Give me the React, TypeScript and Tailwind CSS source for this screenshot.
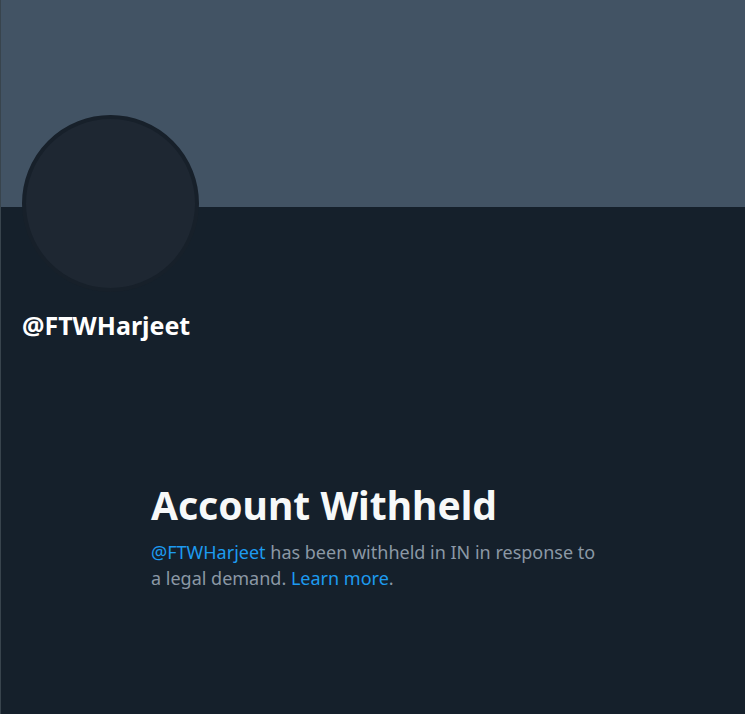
export default function App() {
  return (
    <div className="min-h-screen bg-[#15202b] border-l border-[#38444d] font-['Noto_Sans',sans-serif]">
      <div className="h-[207px] bg-[#425364]" />
      <div className="px-[21px]">
        <div className="-mt-[92px] w-[177px] h-[177px] rounded-full border-[4px] border-[#17202a] bg-[#1e2732]" />
        <div className="mt-[19px] text-[25px] leading-[28px] font-bold text-white">@FTWHarjeet</div>
      </div>
      <div className="ml-[150px] mt-[144px] w-[458px]">
        <h1 className="text-[39px] leading-[44px] font-bold text-[#f7f9f9]">Account Withheld</h1>
        <p className="mt-[12px] text-[18px] leading-[26px] text-[#8b98a5]">
          <span className="text-[#1d9bf0]">@FTWHarjeet</span> has been withheld in IN in response to a legal demand.{' '}
          <span className="text-[#1d9bf0]">Learn more</span>.
        </p>
      </div>
    </div>
  );
}
